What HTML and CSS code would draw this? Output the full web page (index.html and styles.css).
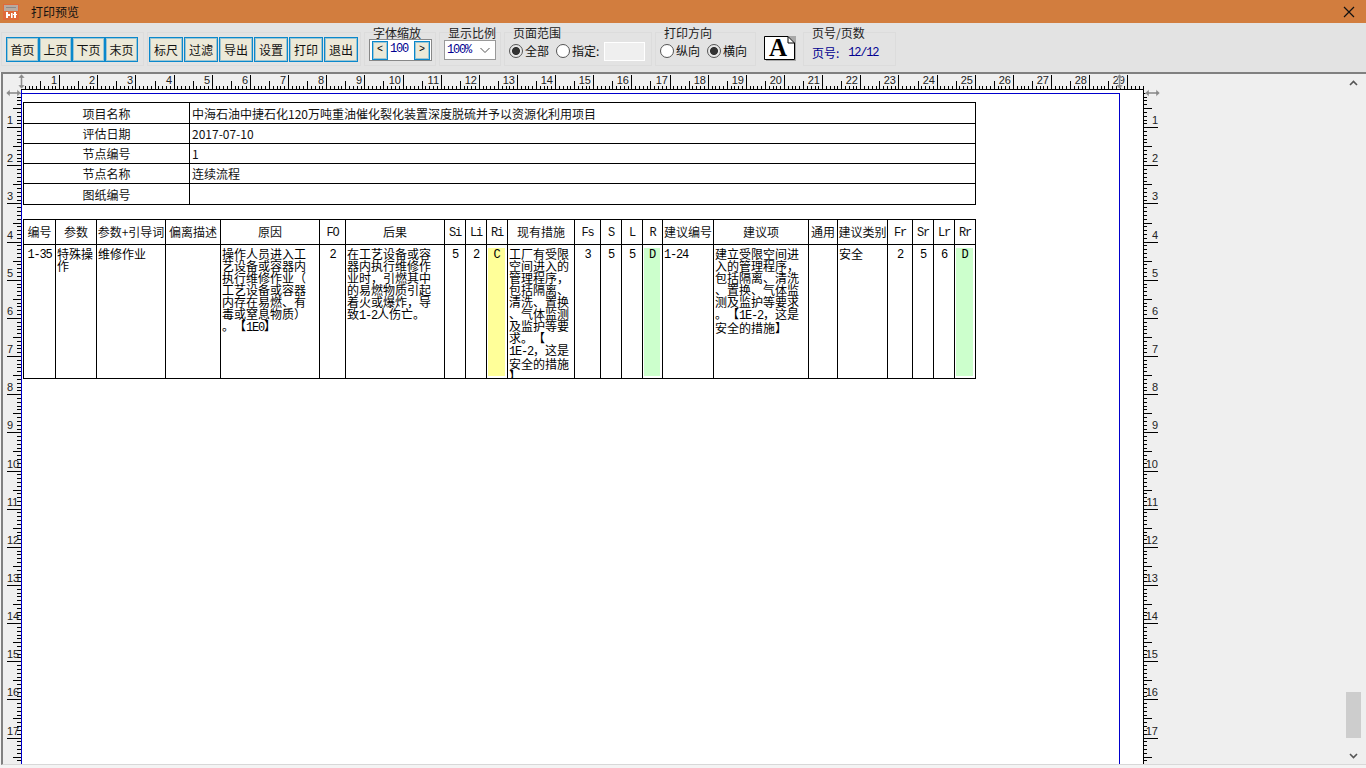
FILE: index.html
```html
<!DOCTYPE html>
<html lang="zh-CN">
<head>
<meta charset="utf-8">
<title>打印预览</title>
<link rel="stylesheet" href="styles.css">
</head>
<body>
<header class="titlebar">
  <svg class="app-icon" width="16" height="16" viewBox="0 0 16 16"><rect width="16" height="16" fill="#e06a3a"/><rect x="1" y="1" width="14" height="6" fill="#b9aaa0"/><rect x="3" y="3" width="10" height="1" fill="#8a8a8a"/><rect x="3" y="8" width="2" height="6" fill="#fff"/><rect x="5" y="10" width="2" height="2" fill="#fff"/><rect x="8" y="9" width="1.6" height="5" fill="#fff"/><rect x="11" y="8" width="2" height="6" fill="#fff"/><rect x="10" y="10" width="4" height="1" fill="#fff"/></svg>
  <span class="title-text">打印预览</span>
  <svg class="close" width="12" height="12" viewBox="0 0 12 12"><path d="M1 1L11 11M11 1L1 11" stroke="#111" stroke-width="1.2" fill="none"/></svg>
</header>

<div class="toolbar">
  <div class="group g-nav">
    <button class="btn">首页</button><button class="btn">上页</button><button class="btn">下页</button><button class="btn">末页</button>
  </div>
  <div class="group g-act">
    <button class="btn">标尺</button><button class="btn">过滤</button><button class="btn">导出</button><button class="btn">设置</button><button class="btn">打印</button><button class="btn">退出</button>
  </div>
  <div class="group g-font">
    <div class="legend">字体缩放</div>
    <div class="stepper"><button class="step">&lt;</button><span class="step-val">100</span><button class="step">&gt;</button></div>
  </div>
  <div class="group g-scale">
    <div class="legend">显示比例</div>
    <div class="combo"><span class="combo-val">100%</span><svg width="12" height="7" viewBox="0 0 12 7"><path d="M1.5 1L6 5.5L10.5 1" stroke="#555" fill="none"/></svg></div>
  </div>
  <div class="group g-range">
    <div class="legend">页面范围</div>
    <div class="radios">
      <label class="radio"><input type="radio" name="range" checked>全部</label>
      <label class="radio"><input type="radio" name="range">指定:</label>
      <span class="range-input"></span>
    </div>
  </div>
  <div class="group g-orient">
    <div class="legend">打印方向</div>
    <div class="radios">
      <label class="radio"><input type="radio" name="orient">纵向</label>
      <label class="radio"><input type="radio" name="orient" checked>横向</label>
    </div>
  </div>
  <svg class="page-icon" width="32" height="25" viewBox="0 0 32 25"><path d="M24 0H32V25H2V24H31V7Z" fill="#a8a8a8"/><path d="M.5.5H24L30.5 7V23.5H.5Z" fill="#fff" stroke="#000"/><path d="M24 .5V7H30.5" fill="none" stroke="#000"/><text x="14" y="20" class="page-a">A</text></svg>
  <div class="group g-page">
    <div class="legend">页号/页数</div>
    <div class="page-info"><span>页号:</span><span class="page-num">12/12</span></div>
  </div>
</div>

<main class="workspace">
  <div class="canvas">
    <div class="sheet">
      <div class="frame">
        <table class="info">
          <colgroup><col><col></colgroup>
          <tr><th>项目名称</th><td>中海石油中捷石化120万吨重油催化裂化装置深度脱硫并予以资源化利用项目</td></tr>
          <tr><th>评估日期</th><td>2017-07-10</td></tr>
          <tr><th>节点编号</th><td>1</td></tr>
          <tr><th>节点名称</th><td>连续流程</td></tr>
          <tr><th>图纸编号</th><td></td></tr>
        </table>
        <table class="risk">
          <colgroup><col><col><col><col><col><col><col><col><col><col><col><col><col><col><col><col><col><col><col><col><col><col><col></colgroup>
          <thead>
            <tr>
              <th>编号</th><th>参数</th><th>参数+引导词</th><th>偏离描述</th><th>原因</th><th class="mono">FO</th><th>后果</th><th class="mono">Si</th><th class="mono">Li</th><th class="mono">Ri</th><th>现有措施</th><th class="mono">Fs</th><th class="mono">S</th><th class="mono">L</th><th class="mono">R</th><th>建议编号</th><th>建议项</th><th>通用</th><th>建议类别</th><th class="mono">Fr</th><th class="mono">Sr</th><th class="mono">Lr</th><th class="mono">Rr</th>
            </tr>
          </thead>
          <tbody>
            <tr>
              <td class="mid mono">1-35</td>
              <td>特殊操<br>作</td>
              <td>维修作业</td>
              <td></td>
              <td>操作人员进入工<br>艺设备或容器内<br>执行维修作业（<br>工艺设备或容器<br>内存在易燃、有<br>毒或窒息物质）<br>。【<span class="mono">1E0</span>】</td>
              <td class="mid mono">2</td>
              <td>在工艺设备或容<br>器内执行维修作<br>业时，引燃其中<br>的易燃物质引起<br>着火或爆炸，导<br>致<span class="mono">1-2</span>人伤亡。</td>
              <td class="mid mono">5</td>
              <td class="mid mono">2</td>
              <td class="rating"><div class="fill fill-c mono">C</div></td>
              <td><div class="clip">工厂有受限<br>空间进入的<br>管理程序，<br>包括隔离、<br>清洗、置换<br>、气体监测<br>及监护等要<br>求。【<br><span class="mono">1E-2</span>，这是<br>安全的措施<br>】</div></td>
              <td class="mid mono">3</td>
              <td class="mid mono">5</td>
              <td class="mid mono">5</td>
              <td class="rating"><div class="fill fill-d mono">D</div></td>
              <td class="mono">1-24</td>
              <td>建立受限空间进<br>入的管理程序，<br>包括隔离、清洗<br>、置换、气体监<br>测及监护等要求<br>。【<span class="mono">1E-2</span>，这是<br>安全的措施】</td>
              <td></td>
              <td>安全</td>
              <td class="mid mono">2</td>
              <td class="mid mono">5</td>
              <td class="mid mono">6</td>
              <td class="rating"><div class="fill fill-d mono">D</div></td>
            </tr>
          </tbody>
        </table>
      </div>
    </div>
    <svg id="rulers" class="rulers" width="1343" height="691" viewBox="3 74 1343 691"></svg>
  </div>
  <aside class="scrollbar">
    <div class="sb-btn"><svg width="9" height="6" viewBox="0 0 9 6"><path d="M1 5L4.5 1.5L8 5" stroke="#555" stroke-width="1.6" fill="none"/></svg></div>
    <div class="sb-space"></div>
    <div class="sb-thumb"></div>
    <div class="sb-btn sb-down"><svg width="9" height="6" viewBox="0 0 9 6"><path d="M1 1L4.5 4.5L8 1" stroke="#555" stroke-width="1.6" fill="none"/></svg></div>
  </aside>
</main>
<script src="ruler.js"></script>
</body>
</html>
```
FILE: styles.css
```css
* { box-sizing: border-box; }
html, body { margin: 0; height: 100%; }
body {
  width: 1366px; height: 768px; overflow: hidden;
  background: #f4f4f4;
  font: 12px/14px "Noto Sans CJK SC", "Liberation Sans", sans-serif;
  color: #111;
}
.titlebar {
  height: 23px; background: #d27d3e;
  display: flex; align-items: center;
  padding: 0 11px 0 3px;
}
.app-icon { flex: none; }
.title-text { margin-left: 12px; flex: 1; }
.close { flex: none; }

.toolbar {
  height: 49px; background: #e3e3e3;
  display: flex; align-items: flex-start; gap: 3px;
  padding: 9px 0 0 1px;
}
.group {
  height: 34px; flex: none;
  border: 1px solid #dcdcdc;
}
.g-nav, .g-act { display: flex; padding-top: 4px; }
.g-nav { width: 143px; padding-left: 4px; }
.g-act { width: 214px; padding-left: 1px; gap: 1px; }
.btn {
  width: 33px; height: 25px; padding: 0;
  background: #ece9d8; border: 1px solid #0a88cc;
  box-shadow: inset 0 0 0 1px rgba(10, 136, 204, .35);
  font: inherit; color: #111;
}
.g-act .btn { width: 34px; }
.legend {
  height: 14px; margin: -7px 0 0 8px;
  white-space: nowrap; color: #222;
}
.g-font { width: 72px; }
.g-scale { width: 62px; }
.g-range { width: 148px; }
.g-orient { width: 101px; }
.g-orient .radios { margin-left: 4px; }
.g-page { width: 93px; margin-left: 1px; }
.stepper {
  width: 63px; height: 22px; margin: -1px 0 0 4px;
  background: #fff; border: 1px solid #888;
  display: flex; align-items: center;
  padding: 0 0 0 2px;
}
.step {
  width: 16px; height: 19px; padding: 0;
  background: #ece9d8; border: 1px solid #0a88cc;
  box-shadow: inset 0 0 0 1px rgba(10, 136, 204, .35);
  font: 10px/1 "Liberation Mono", monospace; color: #000;
}
.step-val, .combo-val, .page-num {
  font: 12px/14px "Liberation Mono", monospace; letter-spacing: -1.2px; color: #000090;
}
.step-val { width: 26px; text-align: center; padding: 0 4px 2px 0; }
.combo {
  width: 52px; height: 20px; margin: 0 0 0 4px;
  background: #fff; border: 1px solid #999;
  display: flex; align-items: center; justify-content: space-between;
  padding: 0 4px 0 2px;
}
.radios { display: flex; align-items: center; height: 20px; margin: 1px 0 0 4px; }
.radio { display: flex; align-items: center; margin-right: 7px; color: #111; }
.radio input {
  appearance: none; -webkit-appearance: none;
  width: 14px; height: 14px; margin: 0 2px 0 0;
  border: 1px solid #555; border-radius: 50%; background: #fff;
}
.radio input:checked { background: radial-gradient(circle, #333 0 3.6px, #e8e8e8 4.4px); }
.range-input { width: 41px; height: 19px; margin-left: -2px; background: #efefef; border: 1px solid #fff; }
.page-icon { flex: none; margin: 4px 3px 0 5px; }
.page-a { font: bold 25px "Liberation Serif", serif; text-anchor: middle; fill: #000; }
.page-info { display: flex; margin: 6px 0 0 8px; color: #000090; }
.page-num { margin-left: 9px; }

.workspace {
  height: 693px; margin-left: 1px;
  border-top: 2px solid #808080; border-left: 2px solid #808080; border-bottom: 1px solid #d8d8d8;
  background: #efefef;
  display: flex;
}
.canvas {
  position: relative; width: 1343px; flex: none;
  overflow: hidden; padding: 16px 0 0 18px;
}
.sheet { width: 1122px; height: 700px; background: #fff; padding-top: 3px; }
.frame {
  width: 1099px; height: 700px;
  border-top: 1px solid #0000cc; border-right: 1px solid #0000cc;
  padding: 8px 0 0 2px;
}
.rulers { position: absolute; left: 0; top: 0; pointer-events: none; }
.rulers .ticks { shape-rendering: crispEdges; stroke: #000; fill: none; }
.rulers .margin-line { shape-rendering: crispEdges; stroke: #0000cc; fill: none; }
.rulers .handle { fill: #8a8a8a; stroke: #fff; stroke-width: .4; }
.rulers text { font: 11px "Liberation Sans", sans-serif; fill: #222; }

table { border-collapse: separate; border-spacing: 0; table-layout: fixed; border-top: 1px solid #000; border-left: 1px solid #000; }
th, td { border-right: 1px solid #000; border-bottom: 1px solid #000; padding: 0; font-weight: 400; white-space: nowrap; overflow: hidden; }
.info { width: 953px; }
.info col:nth-child(1) { width: 166px; }
.info col:nth-child(2) { width: 786px; }
.info tr { height: 20px; }
.info tr:first-child, .info tr:last-child { height: 21px; }
.info th { text-align: center; line-height: 14px; padding-top: 1px; }
.info td { padding: 1px 0 0 2px; line-height: 14px; }

.risk { width: 953px; margin-top: 14px; text-spacing-trim: space-all; }
.risk col:nth-child(1) { width: 32px; }
.risk col:nth-child(2) { width: 41px; }
.risk col:nth-child(3) { width: 69px; }
.risk col:nth-child(4) { width: 55px; }
.risk col:nth-child(5) { width: 99px; }
.risk col:nth-child(6) { width: 26px; }
.risk col:nth-child(7) { width: 99px; }
.risk col:nth-child(8), .risk col:nth-child(9), .risk col:nth-child(10) { width: 21px; }
.risk col:nth-child(11) { width: 67px; }
.risk col:nth-child(12) { width: 26px; }
.risk col:nth-child(13), .risk col:nth-child(14) { width: 21px; }
.risk col:nth-child(15) { width: 20px; }
.risk col:nth-child(16) { width: 51px; }
.risk col:nth-child(17) { width: 95px; }
.risk col:nth-child(18) { width: 29px; }
.risk col:nth-child(19) { width: 50px; }
.risk col:nth-child(20) { width: 25px; }
.risk col:nth-child(21), .risk col:nth-child(22), .risk col:nth-child(23) { width: 21px; }
.risk thead tr { height: 25px; }
.risk th { text-align: center; line-height: 14px; }
.risk th.mono { padding-top: 1px; }
.risk tbody tr { height: 134px; }
.risk td { vertical-align: top; padding: 3px 0 0 1px; line-height: 12px; color: #000; }
.risk td.mono { padding-top: 4px; }
.risk td.mid { text-align: center; padding-left: 0; }
.mono { font-family: "Liberation Mono", monospace; font-size: 12px; letter-spacing: -1.2px; }
.clip { height: 130px; overflow: hidden; }
.risk td.rating { padding: 3px 2px 2px 1px; }
.fill { height: 128px; padding-top: 1px; text-align: center; }
.fill-c { background: #ffff99; }
.fill-d { background: #ccffcc; }

.scrollbar { flex: 1; display: flex; flex-direction: column; padding-right: 5px; }
.sb-btn { height: 18px; display: flex; align-items: center; justify-content: center; }
.sb-down { height: 17px; margin-top: 9px; }
.sb-space { flex: 1; }
.sb-thumb { height: 46px; background: #cdcdcd; }
```
FILE: ruler.js
```js
(function () {
  var svg = document.getElementById('rulers');
  var NS = 'http://www.w3.org/2000/svg';
  var CM = 38.15, X0 = 21, Y0 = 89, RX = 1143, BOTTOM = 765;
  var d = '';
  var i, p, v, t;
  // horizontal ruler
  d += 'M' + X0 + ' ' + (Y0 + .5) + 'H' + RX;
  for (i = 1; X0 + i * CM / 10 < RX; i++) {
    p = Math.round(X0 + i * CM / 10) + .5;
    t = i % 10 === 0 ? 75 : (i % 5 === 0 ? 81 : 86);
    d += 'M' + p + ' ' + t + 'V' + Y0;
  }
  // vertical rulers
  for (i = 1; Y0 + i * CM / 10 < BOTTOM; i++) {
    p = Math.round(Y0 + i * CM / 10) + .5;
    v = i % 10 === 0 ? 0 : (i % 5 === 0 ? 1 : 2);
    d += 'M' + [7, 13, 17][v] + ' ' + p + 'H' + X0;
    d += 'M' + RX + ' ' + p + 'H' + [1158, 1152, 1147][v];
  }
  d += 'M' + (RX + .5) + ' ' + Y0 + 'V' + BOTTOM;
  var path = document.createElementNS(NS, 'path');
  path.setAttribute('d', d);
  path.setAttribute('class', 'ticks');
  svg.appendChild(path);

  var blue = document.createElementNS(NS, 'path');
  blue.setAttribute('d', 'M21.5 90V765');
  blue.setAttribute('class', 'margin-line');
  svg.appendChild(blue);

  function label(str, x, y, anchor) {
    var el = document.createElementNS(NS, 'text');
    el.setAttribute('x', x);
    el.setAttribute('y', y);
    el.setAttribute('text-anchor', anchor);
    el.textContent = str;
    svg.appendChild(el);
  }
  for (i = 1; i <= 29; i++) label(String(i), Math.round(X0 + i * CM) - 2, 84, 'end');
  for (i = 1; i <= 17; i++) {
    p = Math.round(Y0 + i * CM);
    label(String(i), 7, p - 3, 'start');
    label(String(i), 1158, p - 3, 'end');
  }
  function handle(dAttr) {
    var h = document.createElementNS(NS, 'path');
    h.setAttribute('d', dAttr);
    h.setAttribute('class', 'handle');
    svg.appendChild(h);
  }
  function vArrow(x) {
    handle('M' + x + ' 74l3.5 4h-2.5v7h2.5l-3.5 4l-3.5-4h2.5v-7h-2.5z');
  }
  function hArrow(x) {
    handle('M' + x + ' 93l4-3.5v2.5h7v-2.5l4 3.5l-4 3.5v-2.5h-7v2.5z');
  }
  vArrow(21.5); vArrow(1119.5);
  hArrow(6); hArrow(1145);
})();
```
